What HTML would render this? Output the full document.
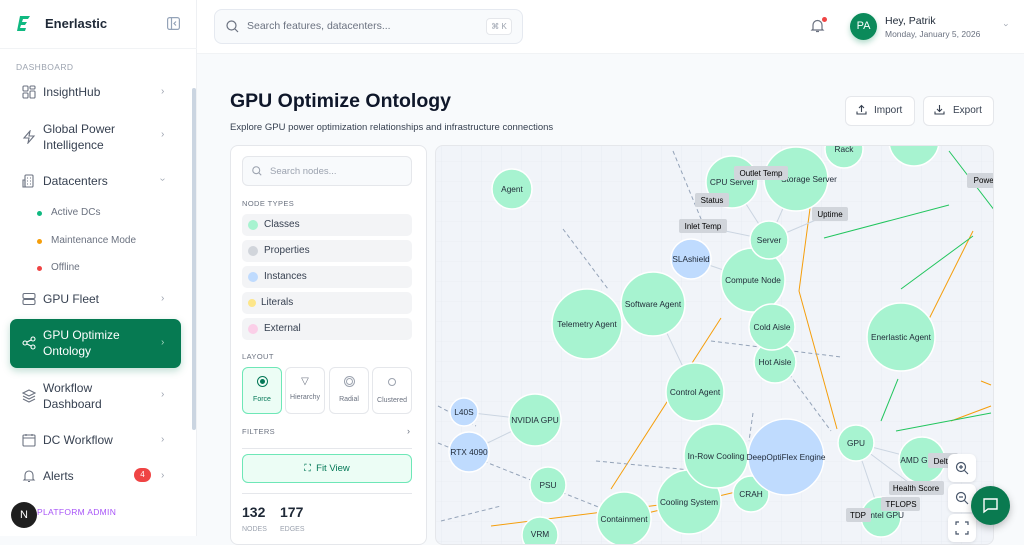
<!DOCTYPE html>
<html><head><meta charset="utf-8"><style>
*{box-sizing:border-box;margin:0;padding:0}
body{width:1024px;height:536px;overflow:hidden;background:#f8fafc;font-family:"Liberation Sans",sans-serif;color:#1f2937;position:relative}
.sb{position:absolute;left:0;top:0;width:197px;height:536px;background:#fff;border-right:1px solid #eef0f3}
.abs{position:absolute}
.nav{position:absolute;left:22px;font-size:12px;color:#374151;display:flex;align-items:center}
.nav .ic{width:14px;height:14px;margin-right:7px}
.chev{position:absolute;left:161px;font-size:10px;color:#9ca3af}
.sub{position:absolute;left:37px;font-size:10px;color:#6b7280}
.sub i{position:absolute;left:0;top:4px;width:5px;height:5px;border-radius:50%}
.legend{position:absolute;left:242px;width:170px;height:22px;background:#f3f4f6;border-radius:5px;font-size:10px;color:#374151;padding-left:22px;line-height:22px}
.legend i{position:absolute;left:6px;top:6px;width:10px;height:10px;border-radius:50%}
.lay{position:absolute;top:367px;width:40px;height:47px;border:1px solid #e5e7eb;border-radius:6px;background:#fff;font-size:7px;color:#6b7280;text-align:center}
.zb{position:absolute;left:948px;width:28px;height:28px;background:#fff;border-radius:6px;box-shadow:0 1px 3px rgba(0,0,0,.1)}
</style></head><body>
<div class="sb">
 <svg class="abs" style="left:17px;top:15px" width="14" height="16" viewBox="0 0 14 16"><path d="M3 1h10l-2 3H6l-1 3h5l-2 3H4l-1 3h6l-1 3H0z" fill="#10b981"/></svg>
 <div class="abs" style="left:45px;top:16px;font-size:13px;font-weight:bold;color:#1f2937">Enerlastic</div>
 <svg class="abs" style="left:167px;top:17px" width="13" height="13" viewBox="0 0 13 13" fill="none" stroke="#94a3b8" stroke-width="1.2"><rect x=".6" y=".6" width="11.8" height="11.8" rx="2"/><path d="M4.5 1v11M9 4.5L7 6.5 9 8.5"/></svg>
 <div class="abs" style="left:0;top:48px;width:197px;border-top:1px solid #f1f3f5"></div>
 <div class="abs" style="left:16px;top:62px;font-size:8.5px;color:#9ca3af;letter-spacing:.4px">DASHBOARD</div>
 <div class="abs" style="left:192px;top:88px;width:4px;height:342px;background:#cbd5e1;border-radius:2px"></div>
 <div class="nav" style="top:85px"><svg class="ic" viewBox="0 0 14 14" fill="none" stroke="#6b7280" stroke-width="1.1"><rect x="1" y="1" width="5" height="5" rx="1"/><rect x="8" y="1" width="5" height="3" rx="1"/><rect x="1" y="8" width="5" height="5" rx="1"/><rect x="8" y="6" width="5" height="7" rx="1"/></svg>InsightHub</div><div class="chev" style="top:86px">›</div>
 <div class="nav" style="top:121px;align-items:center"><svg class="ic" viewBox="0 0 14 14" fill="none" stroke="#6b7280" stroke-width="1.1"><path d="M8 1L2 8h5l-1 5 6-7H7z"/></svg><span style="line-height:16px">Global Power<br>Intelligence</span></div><div class="chev" style="top:129px">›</div>
 <div class="nav" style="top:174px"><svg class="ic" viewBox="0 0 14 14" fill="none" stroke="#6b7280" stroke-width="1.1"><rect x="3" y="1" width="8" height="12" rx="1"/><path d="M1 6h2v7H1zM5 4h1M8 4h1M5 7h1M8 7h1M5 10h1M8 10h1"/></svg>Datacenters</div><div class="chev" style="top:174px;transform:rotate(90deg)">›</div>
 <div class="sub" style="top:207px"><i style="background:#10b981"></i><span style="margin-left:14px">Active DCs</span></div>
 <div class="sub" style="top:235px"><i style="background:#f59e0b"></i><span style="margin-left:14px">Maintenance Mode</span></div>
 <div class="sub" style="top:262px"><i style="background:#ef4444"></i><span style="margin-left:14px">Offline</span></div>
 <div class="nav" style="top:292px"><svg class="ic" viewBox="0 0 14 14" fill="none" stroke="#6b7280" stroke-width="1.1"><rect x="1" y="1.5" width="12" height="5" rx="1.5"/><rect x="1" y="7.5" width="12" height="5" rx="1.5"/></svg>GPU Fleet</div><div class="chev" style="top:293px">›</div>
 <div class="abs" style="left:10px;top:319px;width:171px;height:49px;background:#067a52;border-radius:7px;box-shadow:0 3px 8px rgba(6,122,82,.25)"></div>
 <div class="nav" style="top:327px;color:#fff"><svg class="ic" viewBox="0 0 14 14" fill="none" stroke="#fff" stroke-width="1.1"><circle cx="3" cy="7" r="2"/><circle cx="11" cy="3" r="2"/><circle cx="11" cy="11" r="2"/><path d="M5 6l4-2M5 8l4 2"/></svg><span style="line-height:16px">GPU Optimize<br>Ontology</span></div><div class="chev" style="top:337px;color:#a7d8c2">›</div>
 <div class="nav" style="top:380px"><svg class="ic" viewBox="0 0 14 14" fill="none" stroke="#6b7280" stroke-width="1.1"><path d="M7 1l6 3-6 3-6-3zM1 7l6 3 6-3M1 10l6 3 6-3"/></svg><span style="line-height:16px">Workflow<br>Dashboard</span></div><div class="chev" style="top:389px">›</div>
 <div class="nav" style="top:433px"><svg class="ic" viewBox="0 0 14 14" fill="none" stroke="#6b7280" stroke-width="1.1"><rect x="1" y="2" width="12" height="11" rx="1"/><path d="M1 5h12M4 1v2M10 1v2"/></svg>DC Workflow</div><div class="chev" style="top:434px">›</div>
 <div class="nav" style="top:469px"><svg class="ic" viewBox="0 0 14 14" fill="none" stroke="#6b7280" stroke-width="1.1"><path d="M3 10V6a4 4 0 018 0v4l1 1H2zM6 12.5h2"/></svg>Alerts</div>
 <div class="abs" style="left:134px;top:468px;width:17px;height:14px;background:#ef4444;border-radius:7px;color:#fff;font-size:8px;text-align:center;line-height:14px">4</div><div class="chev" style="top:470px">›</div>
 <div class="abs" style="left:37px;top:507px;font-size:8.5px;color:#a855f7;letter-spacing:.3px">PLATFORM ADMIN</div>
 <div class="abs" style="left:11px;top:502px;width:26px;height:26px;border-radius:50%;background:#1f1f1f;color:#fff;font-size:11px;text-align:center;line-height:26px">N</div>
</div>

<div class="abs" style="left:197px;top:0;width:827px;height:54px;background:#fff;border-bottom:1px solid #f1f3f5"></div>
<div class="abs" style="left:214px;top:9px;width:309px;height:35px;background:#f8fafc;border:1px solid #e5e9f0;border-radius:8px"></div>
<svg class="abs" style="left:226px;top:20px" width="13" height="13" viewBox="0 0 13 13" fill="none" stroke="#6b7280" stroke-width="1.2"><circle cx="5.5" cy="5.5" r="4.5"/><path d="M9 9l3 3"/></svg>
<div class="abs" style="left:247px;top:20px;font-size:10.5px;color:#6b7280">Search features, datacenters...</div>
<div class="abs" style="left:486px;top:18px;width:26px;height:17px;border:1px solid #e5e7eb;background:#fff;border-radius:4px;font-size:8px;color:#9ca3af;text-align:center;line-height:15px">⌘ K</div>
<svg class="abs" style="left:810px;top:18px" width="15" height="15" viewBox="0 0 15 15" fill="none" stroke="#6b7280" stroke-width="1.2"><path d="M3 11V7a4.5 4.5 0 019 0v4l1 1H2zM6 13.5h3"/></svg>
<div class="abs" style="left:822px;top:17px;width:5px;height:5px;border-radius:50%;background:#ef4444"></div>
<div class="abs" style="left:850px;top:13px;width:27px;height:27px;border-radius:50%;background:#0b8a5a;color:#fff;font-size:11px;text-align:center;line-height:27px;box-shadow:0 3px 6px rgba(11,138,90,.3)">PA</div>
<div class="abs" style="left:885px;top:15px;font-size:10.5px;color:#1f2937">Hey, Patrik</div>
<div class="abs" style="left:885px;top:29px;font-size:8.5px;color:#6b7280">Monday, January 5, 2026</div>
<div class="abs" style="left:1005px;top:20px;font-size:9px;color:#9ca3af;transform:rotate(90deg)">›</div>

<div class="abs" style="left:230px;top:90px;font-size:19.5px;font-weight:bold;color:#0f172a">GPU Optimize Ontology</div>
<div class="abs" style="left:230px;top:122px;font-size:9.5px;color:#374151">Explore GPU power optimization relationships and infrastructure connections</div>
<div class="abs" style="left:845px;top:96px;width:70px;height:30px;background:#fff;border:1px solid #e5e7eb;border-radius:6px;font-size:10px;color:#374151;line-height:28px;padding-left:28px">Import</div>
<svg class="abs" style="left:856px;top:104px" width="11" height="11" viewBox="0 0 11 11" fill="none" stroke="#374151" stroke-width="1.1"><path d="M5.5 8V1.5M3 4l2.5-2.5L8 4M1 7.5V10h9V7.5"/></svg>
<div class="abs" style="left:923px;top:96px;width:71px;height:30px;background:#fff;border:1px solid #e5e7eb;border-radius:6px;font-size:10px;color:#374151;line-height:28px;padding-left:29px">Export</div>
<svg class="abs" style="left:934px;top:104px" width="11" height="11" viewBox="0 0 11 11" fill="none" stroke="#374151" stroke-width="1.1"><path d="M5.5 1v6.5M3 5l2.5 2.5L8 5M1 7.5V10h9V7.5"/></svg>

<div class="abs" style="left:230px;top:145px;width:197px;height:400px;background:#fff;border:1px solid #e5e7eb;border-radius:8px"></div>
<div class="abs" style="left:242px;top:156px;width:170px;height:30px;background:#f8fafc;border:1px solid #e5e7eb;border-radius:6px"></div>
<svg class="abs" style="left:252px;top:166px" width="10" height="10" viewBox="0 0 13 13" fill="none" stroke="#9ca3af" stroke-width="1.4"><circle cx="5.5" cy="5.5" r="4.5"/><path d="M9 9l3 3"/></svg>
<div class="abs" style="left:270px;top:166px;font-size:9.5px;color:#9ca3af">Search nodes...</div>
<div class="abs" style="left:242px;top:199px;font-size:7.5px;color:#6b7280;letter-spacing:.4px">NODE TYPES</div>
<div class="legend" style="top:214px"><i style="background:#a7f3d0"></i>Classes</div>
<div class="legend" style="top:240px"><i style="background:#d1d5db"></i>Properties</div>
<div class="legend" style="top:266px"><i style="background:#bfdbfe"></i>Instances</div>
<div class="legend" style="top:292px;padding-left:19px"><i style="background:#fde68a;width:8px;height:8px;top:7px;transform:rotate(45deg)"></i>Literals</div>
<div class="legend" style="top:318px"><i style="background:#fbcfe8"></i>External</div>
<div class="abs" style="left:242px;top:352px;font-size:7.5px;color:#6b7280;letter-spacing:.4px">LAYOUT</div>
<div class="lay" style="left:242px;background:#ecfdf5;border-color:#6ee7b7;color:#047857"><div style="margin:8px auto 0;width:11px;height:11px;border:1px solid #047857;border-radius:50%;padding:2px"><div style="width:5px;height:5px;border-radius:50%;background:#047857"></div></div><div style="margin-top:9px">Force</div></div>
<div class="lay" style="left:285px"><div style="margin-top:8px;font-size:10px;color:#6b7280">▽</div><div style="margin-top:7px">Hierarchy</div></div>
<div class="lay" style="left:329px"><div style="margin:8px auto 0;width:11px;height:11px;border:1px solid #9ca3af;border-radius:50%;padding:1px"><div style="width:7px;height:7px;border-radius:50%;border:1px solid #9ca3af"></div></div><div style="margin-top:9px">Radial</div></div>
<div class="lay" style="left:372px"><div style="margin:10px auto 0;width:8px;height:8px;border:1px solid #9ca3af;border-radius:50%"></div><div style="margin-top:11px">Clustered</div></div>
<div class="abs" style="left:242px;top:427px;font-size:7.5px;color:#6b7280;letter-spacing:.4px">FILTERS</div>
<div class="abs" style="left:407px;top:426px;font-size:9px;color:#6b7280">›</div>
<div class="abs" style="left:242px;top:448px;width:170px;border-top:1px solid #e5e7eb"></div>
<div class="abs" style="left:242px;top:454px;width:170px;height:29px;background:#ecfdf5;border:1px solid #6ee7b7;border-radius:6px;font-size:9.5px;color:#047857;text-align:center;line-height:27px">⛶&nbsp; Fit View</div>
<div class="abs" style="left:242px;top:493px;width:170px;border-top:1px solid #e5e7eb"></div>
<div class="abs" style="left:242px;top:504px;font-size:14px;font-weight:bold;color:#1f2937">132</div>
<div class="abs" style="left:280px;top:504px;font-size:14px;font-weight:bold;color:#1f2937">177</div>
<div class="abs" style="left:242px;top:526px;font-size:7px;color:#9ca3af">NODES</div>
<div class="abs" style="left:280px;top:526px;font-size:7px;color:#9ca3af">EDGES</div>

<div class="abs" style="left:435px;top:145px;width:559px;height:400px;border:1px solid #e5e7eb;border-radius:8px;overflow:hidden;background:#f1f4f9">
<svg width="559" height="400" viewBox="435 145 559 400" font-family="Liberation Sans,sans-serif" font-size="8.3" text-anchor="middle">
<defs><pattern id="g" width="20" height="20" patternUnits="userSpaceOnUse"><path d="M20 0H0V20" fill="none" stroke="#e3e8ef" stroke-width=".6"/></pattern></defs>
<rect x="435" y="145" width="559" height="400" fill="url(#g)"/>
<g stroke-width="1" fill="none">
<path d="M610 488L720 317" stroke="#f59e0b"/>
<path d="M810 200L798 290L836 428" stroke="#f59e0b"/>
<path d="M928 318L972 230" stroke="#f59e0b"/>
<path d="M600 523L760 485" stroke="#f59e0b"/>
<path d="M490 525L690 500" stroke="#f59e0b"/>
<path d="M980 380L990 384M950 420L990 405" stroke="#f59e0b"/>
<path d="M823 237L948 204" stroke="#22c55e"/>
<path d="M900 288L972 235M895 430L990 412M948 150L994 210" stroke="#22c55e"/>
<path d="M897 378L880 420" stroke="#22c55e"/>
<g stroke="#94a3b8" stroke-dasharray="4 3">
<path d="M562 228L607 288M437 405L475 425M437 442L640 523M595 460L700 470M710 340L840 356M752 412L748 440M672 150L705 230M788 373L830 430M440 520L500 505"/>
</g>
<g stroke="#cbd5e1"><path d="M768 239L731 181M768 239L795 178M768 239L700 225M768 239L829 213M690 258L752 279M855 442L880 516M855 442L921 459M855 442L915 487M534 419L463 411M534 419L468 451M652 303L694 391"/></g>
</g>
<g fill="#a7f3d0" stroke="#fff" stroke-width="1.5">
<circle cx="511" cy="188" r="20"/><circle cx="843" cy="148" r="19"/><circle cx="913" cy="140" r="25"/>
<circle cx="731" cy="181" r="26"/><circle cx="795" cy="178" r="32"/>
<circle cx="752" cy="279" r="32"/><circle cx="768" cy="239" r="19"/>
<circle cx="652" cy="303" r="32"/><circle cx="586" cy="323" r="35"/>
<circle cx="774" cy="361" r="21"/><circle cx="771" cy="326" r="23"/>
<circle cx="900" cy="336" r="34"/><circle cx="694" cy="391" r="29"/>
<circle cx="534" cy="419" r="26"/><circle cx="547" cy="484" r="18"/>
<circle cx="539" cy="534" r="18"/><circle cx="623" cy="518" r="27"/>
<circle cx="688" cy="501" r="32"/><circle cx="750" cy="493" r="18"/>
<circle cx="715" cy="455" r="32"/><circle cx="855" cy="442" r="18"/>
<circle cx="921" cy="459" r="23"/><circle cx="880" cy="516" r="20"/>
</g>
<g fill="#bfdbfe" stroke="#fff" stroke-width="1.5">
<circle cx="690" cy="258" r="20"/><circle cx="463" cy="411" r="14"/><circle cx="468" cy="451" r="20"/><circle cx="785" cy="456" r="38"/>
</g>
<g fill="#1f2937">
<text x="511" y="191">Agent</text><text x="843" y="151">Rack</text>
<text x="731" y="184">CPU Server</text><text x="808" y="181">Storage Server</text>
<text x="768" y="242">Server</text><text x="690" y="261">SLAshield</text>
<text x="752" y="282">Compute Node</text><text x="652" y="306">Software Agent</text>
<text x="586" y="326">Telemetry Agent</text><text x="771" y="329">Cold Aisle</text>
<text x="774" y="364">Hot Aisle</text><text x="900" y="339">Enerlastic Agent</text>
<text x="694" y="394">Control Agent</text><text x="463" y="414">L40S</text>
<text x="534" y="422">NVIDIA GPU</text><text x="468" y="454">RTX 4090</text>
<text x="715" y="458">In-Row Cooling</text><text x="785" y="459">DeepOptiFlex Engine</text>
<text x="855" y="445">GPU</text><text x="913" y="462">AMD G</text>
<text x="547" y="487">PSU</text><text x="750" y="496">CRAH</text>
<text x="688" y="504">Cooling System</text><text x="623" y="521">Containment</text>
<text x="539" y="536">VRM</text><text x="885" y="517">Intel GPU</text>
</g>
<g font-size="8">
<rect x="733" y="165" width="54" height="14" rx="2" fill="#d1d5db"/><text x="760" y="175">Outlet Temp</text>
<rect x="694" y="192" width="34" height="14" rx="2" fill="#d1d5db"/><text x="711" y="202">Status</text>
<rect x="678" y="218" width="48" height="14" rx="2" fill="#d1d5db"/><text x="702" y="228">Inlet Temp</text>
<rect x="811" y="206" width="36" height="14" rx="2" fill="#d1d5db"/><text x="829" y="216">Uptime</text>
<rect x="966" y="172" width="34" height="15" rx="2" fill="#d1d5db"/><text x="984" y="182">Power</text>
<rect x="927" y="452" width="30" height="15" rx="2" fill="#d1d5db"/><text x="942" y="463">Delta</text>
<rect x="888" y="480" width="55" height="14" rx="2" fill="#d1d5db"/><text x="915" y="490">Health Score</text>
<rect x="880" y="496" width="39" height="14" rx="2" fill="#d1d5db"/><text x="900" y="506">TFLOPS</text>
<rect x="845" y="507" width="25" height="14" rx="2" fill="#d1d5db"/><text x="857" y="517">TDP</text>
</g>
</svg>
</div>
<div class="zb" style="top:454px"></div><div class="zb" style="top:484px"></div><div class="zb" style="top:514px"></div>
<svg class="abs" style="left:955px;top:461px" width="14" height="14" viewBox="0 0 14 14" fill="none" stroke="#475569" stroke-width="1.2"><circle cx="6" cy="6" r="4.5"/><path d="M9.5 9.5L13 13M4 6h4M6 4v4"/></svg>
<svg class="abs" style="left:955px;top:491px" width="14" height="14" viewBox="0 0 14 14" fill="none" stroke="#475569" stroke-width="1.2"><circle cx="6" cy="6" r="4.5"/><path d="M9.5 9.5L13 13M4 6h4"/></svg>
<svg class="abs" style="left:955px;top:521px" width="14" height="14" viewBox="0 0 14 14" fill="none" stroke="#475569" stroke-width="1.2"><path d="M1 4V1h3M10 1h3v3M13 10v3h-3M4 13H1v-3"/></svg>
<div class="abs" style="left:971px;top:486px;width:39px;height:39px;border-radius:50%;background:#0a7a50;box-shadow:0 3px 8px rgba(0,0,0,.25)"></div>
<svg class="abs" style="left:982px;top:497px" width="17" height="17" viewBox="0 0 17 17" fill="none" stroke="#fff" stroke-width="1.4"><path d="M2 2h13v10H6l-4 3z"/></svg>
</body></html>
